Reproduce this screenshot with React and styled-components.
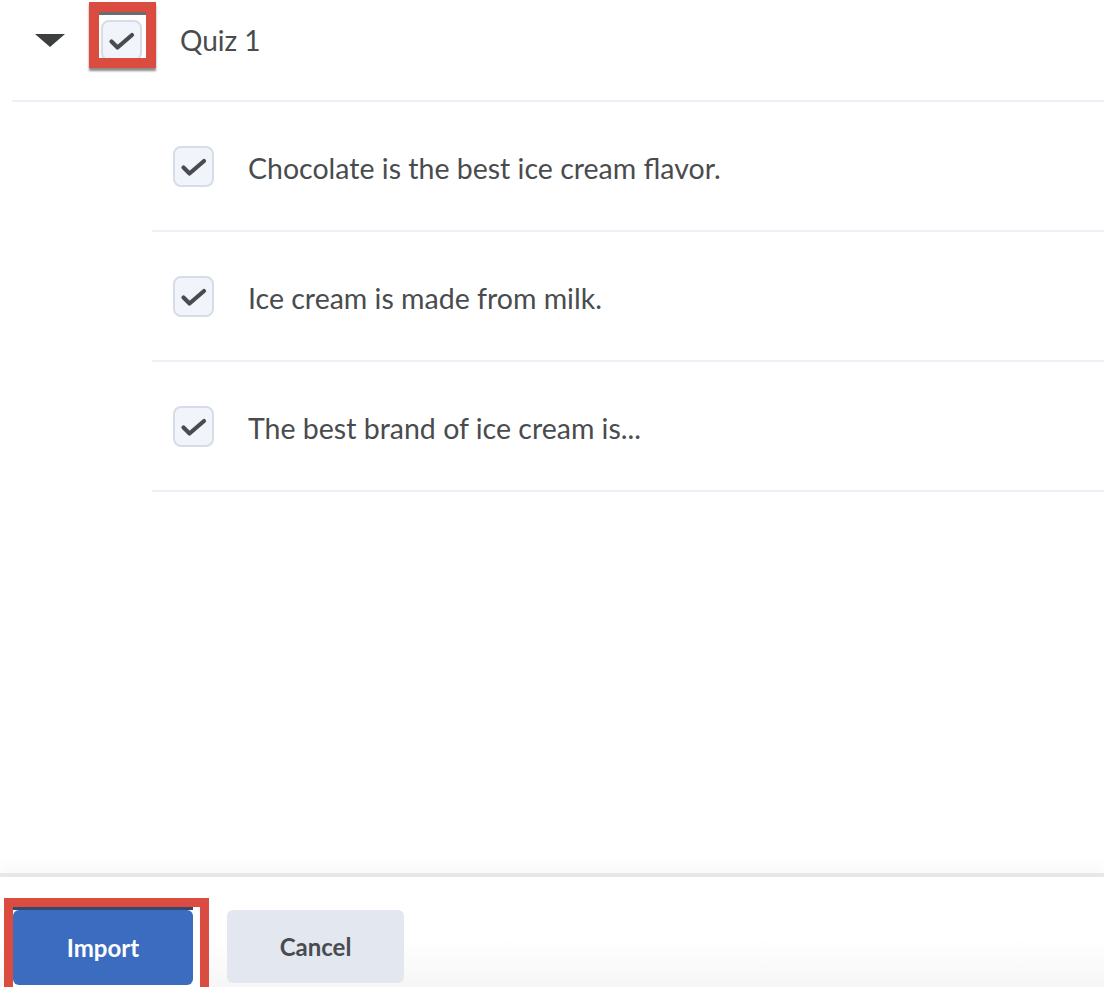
import styled, { createGlobalStyle } from "styled-components";

const GlobalStyle = createGlobalStyle`
  html, body {
    margin: 0;
    padding: 0;
    background: #ffffff;
    font-family: Lato, "Open Sans", sans-serif;
    color: #494c4e;
  }
`;

const Page = styled.div`
  height: 100vh;
  display: flex;
  flex-direction: column;
  overflow: hidden;
`;

const Main = styled.main`
  flex: 1;
`;

const QuizHeader = styled.div`
  display: flex;
  align-items: flex-start;
  height: 100px;
  margin-left: 12px;
  padding-left: 23px;
  border-bottom: 2px solid #edf1f7;
`;

const Caret = styled.span`
  width: 0;
  height: 0;
  margin-top: 34px;
  border-left: 15px solid transparent;
  border-right: 15px solid transparent;
  border-top: 13px solid #3c3e40;
`;

const Highlight = styled.div`
  display: flex;
  justify-content: center;
  align-items: flex-start;
  box-sizing: border-box;
  width: 67px;
  height: 66px;
  margin: 2px 0 0 24px;
  border: 10px solid #d94c3f;
  box-shadow: 0 3px 2px rgba(0, 0, 0, 0.45);
  background: #ffffff;
  overflow: hidden;
  position: relative;

  &::before {
    content: "";
    position: absolute;
    top: 0;
    left: 0;
    right: 0;
    height: 3px;
    background: #6b6d70;
  }
`;

const HighlightInner = styled.div`
  margin-top: 8px;
  margin-left: -3px;
`;

const Box = styled.span`
  display: inline-flex;
  align-items: center;
  justify-content: center;
  box-sizing: border-box;
  width: 41px;
  height: 41px;
  border: 2px solid #d7dde6;
  border-radius: 8px;
  background: #f1f4fa;
  flex-shrink: 0;

  svg {
    width: 37px;
    height: 37px;
  }
`;

const QuizTitle = styled.span`
  margin: 24px 0 0 24px;
  font-size: 28px;
  line-height: 32px;
`;

const Questions = styled.ul`
  list-style: none;
  margin: 0 0 0 152px;
  padding: 0;
`;

const QuestionRow = styled.li`
  display: flex;
  align-items: center;
  gap: 34px;
  height: 128px;
  padding-left: 21px;
  border-bottom: 2px solid #edf1f7;
`;

const QuestionText = styled.span`
  font-size: 28.5px;
  margin-top: 3px;
`;

const Footer = styled.footer`
  box-sizing: border-box;
  height: 114px;
  flex-shrink: 0;
  display: flex;
  align-items: flex-start;
  gap: 18px;
  padding: 21px 0 0 4px;
  border-top: 4px solid #e7e7e8;
  box-shadow: 0 -10px 12px rgba(0, 0, 0, 0.025);
  background: linear-gradient(#ffffff 55%, #f6f6f6);
  overflow: hidden;
`;

const ButtonFrame = styled.div`
  display: flex;
  box-sizing: border-box;
  border: 9px solid #d94c3f;
  border-bottom: none;
  padding: 3px 7px 0 0;
  height: 100px;
  background: #ffffff;
  position: relative;

  &::before {
    content: "";
    position: absolute;
    top: 0;
    left: 0;
    right: 7px;
    height: 3px;
    background: #33496e;
  }
`;

const Button = styled.button`
  width: ${(p) => p.width}px;
  height: ${(p) => (p.primary ? 75 : 73)}px;
  margin-top: ${(p) => (p.primary ? 0 : 12)}px;
  border: none;
  border-radius: 6px;
  font-family: Lato, "Open Sans", sans-serif;
  font-weight: 700;
  font-size: 24px;
  color: ${(p) => (p.primary ? "#ffffff" : "#494c4e")};
  background: ${(p) => (p.primary ? "#3b6cc0" : "#e3e8f0")};
  cursor: pointer;
`;

const Check = () => (
  <svg viewBox="0 0 37 37">
    <path
      d="M8.5 19.5 L14.5 25.5 L29 13"
      fill="none"
      stroke="#494c4e"
      strokeWidth="4.2"
      strokeLinecap="round"
      strokeLinejoin="round"
    />
  </svg>
);

const questions = [
  "Chocolate is the best ice cream flavor.",
  "Ice cream is made from milk.",
  "The best brand of ice cream is...",
];

export default function App() {
  return (
    <>
      <GlobalStyle />
      <Page>
        <Main>
          <QuizHeader>
            <Caret />
            <Highlight>
              <HighlightInner>
                <Box>
                  <Check />
                </Box>
              </HighlightInner>
            </Highlight>
            <QuizTitle>Quiz 1</QuizTitle>
          </QuizHeader>
          <Questions>
            {questions.map((q) => (
              <QuestionRow key={q}>
                <Box>
                  <Check />
                </Box>
                <QuestionText>{q}</QuestionText>
              </QuestionRow>
            ))}
          </Questions>
        </Main>
        <Footer>
          <ButtonFrame>
            <Button primary width={180}>
              Import
            </Button>
          </ButtonFrame>
          <Button width={177}>Cancel</Button>
        </Footer>
      </Page>
    </>
  );
}
